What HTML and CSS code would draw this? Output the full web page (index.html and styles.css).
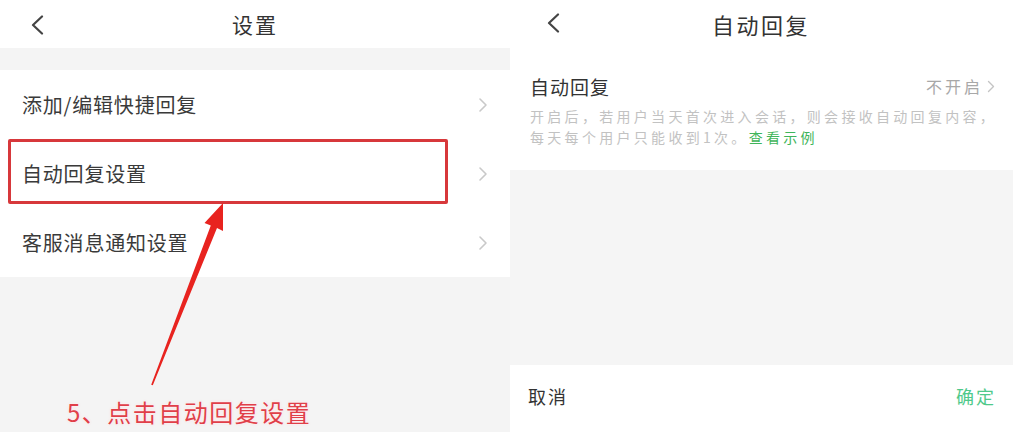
FILE: index.html
```html
<!DOCTYPE html>
<html lang="zh-CN">
<head>
<meta charset="utf-8">
<title>设置 / 自动回复</title>
<link rel="stylesheet" href="styles.css">
</head>
<body>
<div class="screen">
  <section class="panel panel-left">
    <header class="topbar">
      <span class="back">
        <svg width="14" height="20" viewBox="0 0 14 20"><polyline points="12,1.5 3,10 12,18.5" fill="none" stroke="#444" stroke-width="2.2" stroke-linecap="round" stroke-linejoin="round"/></svg>
      </span>
      <h1 class="title">设置</h1>
      <span></span>
    </header>
    <div class="stripe"></div>
    <ul class="menu">
      <li class="menu-row"><span>添加/编辑快捷回复</span><svg class="chev" width="10" height="16" viewBox="0 0 10 16"><polyline points="2,2 8,8 2,14" fill="none" stroke="#c9c9c9" stroke-width="1.6" stroke-linecap="round" stroke-linejoin="round"/></svg></li>
      <li class="menu-row"><span>自动回复设置</span><svg class="chev" width="10" height="16" viewBox="0 0 10 16"><polyline points="2,2 8,8 2,14" fill="none" stroke="#c9c9c9" stroke-width="1.6" stroke-linecap="round" stroke-linejoin="round"/></svg></li>
      <li class="menu-row"><span>客服消息通知设置</span><svg class="chev" width="10" height="16" viewBox="0 0 10 16"><polyline points="2,2 8,8 2,14" fill="none" stroke="#c9c9c9" stroke-width="1.6" stroke-linecap="round" stroke-linejoin="round"/></svg></li>
    </ul>
    <div class="left-fill">
      <p class="caption">5、点击自动回复设置</p>
    </div>
    <div class="highlight"></div>
    <svg class="arrow" width="510" height="432" viewBox="0 0 510 432">
      <polygon points="223,203 223,231 217,228 152.8,385.3 151.2,384.7 210.8,225.5 204.5,223" fill="#e8231f"/>
    </svg>
  </section>

  <section class="panel panel-right">
    <header class="topbar">
      <span class="back">
        <svg width="14" height="20" viewBox="0 0 14 20"><polyline points="12,1.5 3,10 12,18.5" fill="none" stroke="#444" stroke-width="2.2" stroke-linecap="round" stroke-linejoin="round"/></svg>
      </span>
      <h1 class="title title-wide">自动回复</h1>
      <span></span>
    </header>
    <div class="info">
      <div class="info-row">
        <span class="info-label">自动回复</span>
        <span class="info-value">不开启<svg width="8" height="13" viewBox="0 0 8 13"><polyline points="1.5,1.5 6.5,6.5 1.5,11.5" fill="none" stroke="#c4c4c4" stroke-width="1.4" stroke-linecap="round" stroke-linejoin="round"/></svg></span>
      </div>
      <div class="desc">
        <div class="desc-line">开启后，若用户当天首次进入会话，则会接收自动回复内容，</div>
        <div class="desc-line">每天每个用户只能收到1次。<span class="link">查看示例</span></div>
      </div>
    </div>
    <div class="right-fill"></div>
    <footer class="actions">
      <span class="cancel">取消</span>
      <span class="confirm">确定</span>
    </footer>
  </section>
</div>
</body>
</html>
```

FILE: styles.css
```css
* { box-sizing: border-box; }

html, body {
  margin: 0;
  padding: 0;
  background: #ffffff;
}

body {
  width: 1020px;
  height: 432px;
  overflow: hidden;
  font-family: "Noto Sans CJK SC", "Noto Sans", "Liberation Sans", sans-serif;
  color: #333333;
}

.screen {
  display: flex;
  width: 1020px;
  height: 432px;
}

.panel {
  width: 510px;
  height: 432px;
  display: flex;
  flex-direction: column;
  position: relative;
  background: #ffffff;
}

.topbar {
  height: 48px;
  flex: none;
  display: grid;
  grid-template-columns: 1fr auto 1fr;
  align-items: center;
}

.back {
  display: flex;
  align-items: center;
  padding-left: 30px;
  padding-bottom: 3px;
}

.panel-right .back {
  padding-left: 36px;
  padding-bottom: 6px;
}

.title {
  margin: 0;
  font-size: 21px;
  font-weight: 400;
  letter-spacing: 2px;
  line-height: 48px;
  color: #333333;
  padding-bottom: 4px;
}

.title-wide {
  font-size: 22px;
  letter-spacing: 2.5px;
  padding-right: 8px;
}

.stripe {
  height: 22px;
  flex: none;
  background: #f4f4f4;
}

.menu {
  list-style: none;
  margin: 0;
  padding: 0;
  flex: none;
}

.menu-row {
  height: 69px;
  display: flex;
  align-items: center;
  justify-content: space-between;
  padding: 0 22px 0 22px;
  font-size: 20px;
  letter-spacing: 0.8px;
  color: #3a3a3a;
}

.chev { flex: none; }

.left-fill {
  flex: 1;
  background: #f4f4f4;
  display: flex;
  align-items: flex-end;
  padding: 0 0 5px 67px;
}

.caption {
  margin: 0;
  font-size: 24px;
  font-weight: 400;
  line-height: 30px;
  letter-spacing: 1.5px;
  color: #e03f49;
  text-shadow: 0 0 2px #ffffff, 0 0 3px #ffd0d4;
}

.highlight {
  position: absolute;
  left: 8px;
  top: 139px;
  width: 440px;
  height: 65px;
  border: 3px solid #d7383b;
  border-radius: 2px;
}

.arrow {
  position: absolute;
  left: 0;
  top: 0;
}

/* right panel */
.info {
  height: 122px;
  flex: none;
  padding: 24px 25px 0 20px;
}

.info-row {
  height: 28px;
  display: flex;
  align-items: center;
  justify-content: space-between;
}

.info-label {
  font-size: 19px;
  letter-spacing: 1px;
  color: #333333;
}

.info-value {
  display: flex;
  align-items: center;
  gap: 4px;
  font-size: 16px;
  letter-spacing: 3px;
  color: #a8a8a8;
}

.desc {
  margin-top: 6px;
  font-size: 14px;
  line-height: 21px;
  letter-spacing: 3.3px;
  color: #c2c2c2;
  white-space: nowrap;
}

.link {
  color: #3fb55a;
}

.right-fill {
  height: 195px;
  flex: none;
  margin-right: 7px;
  background: #f5f5f5;
}

.actions {
  flex: 1;
  display: flex;
  align-items: center;
  justify-content: space-between;
  padding: 0 24px 6px 18px;
}

.cancel {
  font-size: 18px;
  letter-spacing: 2px;
  color: #333333;
}

.confirm {
  font-size: 18px;
  letter-spacing: 2px;
  color: #4fc98a;
}
```
